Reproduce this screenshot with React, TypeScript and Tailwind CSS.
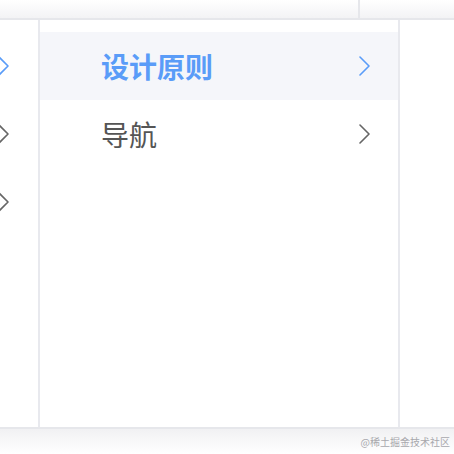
const Chevron = ({ active }: { active?: boolean }) => (
  <svg width="11" height="20" viewBox="0 0 11 20" fill="none" className="shrink-0">
    <path
      d="M1 1 L10 10 L1 19"
      stroke={active ? '#5a9cf8' : '#666666'}
      strokeWidth="1.6"
      strokeLinecap="round"
      strokeLinejoin="round"
    />
  </svg>
)

const items = [
  { label: '设计原则', active: true },
  { label: '导航', active: false },
]

export default function App() {
  return (
    <div
      className="w-[454px] h-[454px] flex flex-col bg-white overflow-hidden"
      style={{ fontFamily: '"Noto Sans CJK SC", "Noto Sans", sans-serif' }}
    >
      {/* top strip */}
      <div className="h-[20px] flex border-b-2 border-[#e6e7eb] bg-gradient-to-b from-white to-[#f3f3f5]">
        <div className="w-[358px]" />
        <div className="flex-1 border-l-2 border-[#e6e7eb]" />
      </div>

      <div className="flex-1 flex min-h-0">
        {/* clipped previous column */}
        <div className="w-[40px] border-r-2 border-[#e8e9ee] pt-[12px] pr-[29px] flex flex-col items-end">
          {[true, false, false].map((a, i) => (
            <div key={i} className="h-[68px] flex items-center">
              <Chevron active={a} />
            </div>
          ))}
        </div>

        {/* current column */}
        <div className="w-[360px] border-r-2 border-[#e8e9ee] pt-[12px]">
          {items.map((it) => (
            <div
              key={it.label}
              className={`h-[68px] flex items-center justify-between pl-[61px] pr-[28px] ${
                it.active ? 'bg-[#f5f6fa]' : ''
              }`}
            >
              <span
                className={`text-[28px] leading-none ${
                  it.active ? 'font-bold text-[#5a9cf8]' : 'text-[#555555]'
                }`}
              >
                {it.label}
              </span>
              <Chevron active={it.active} />
            </div>
          ))}
        </div>

        <div className="flex-1" />
      </div>

      {/* bottom strip */}
      <div className="h-[27px] border-t-2 border-[#e6e7eb] bg-gradient-to-b from-[#f1f1f3] to-white flex items-center justify-end pr-[4px]">
        <span className="text-[10px] text-[#a8a8ad] leading-none">@稀土掘金技术社区</span>
      </div>
    </div>
  )
}
